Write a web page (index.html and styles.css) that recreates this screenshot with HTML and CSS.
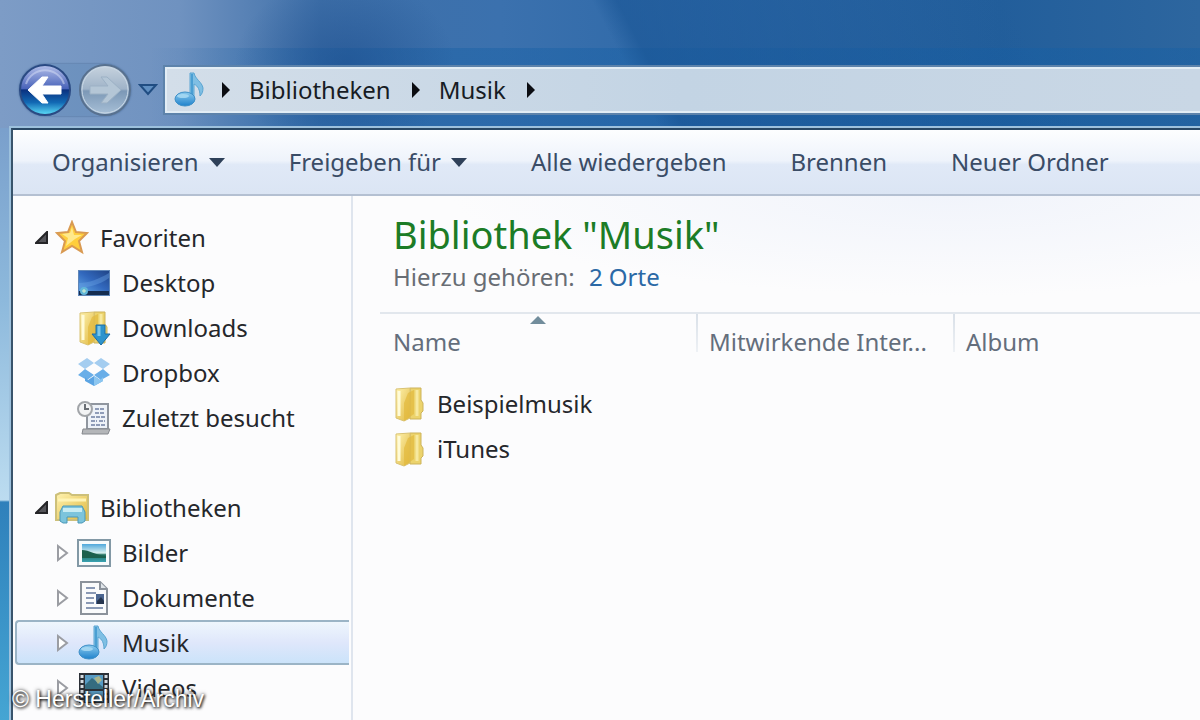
FILE: index.html
```html
<!DOCTYPE html>
<html lang="de">
<head>
    <meta charset="UTF-8">
    <meta name="viewport" content="width=device-width, initial-scale=1.0">
    <title>Musik</title>
    <link rel="stylesheet" href="styles.css">
</head>
<body>
<!-- Shared icons and gradients -->
<svg class="defs" aria-hidden="true">
    <defs>
        <linearGradient id="gold" x1="0" x2="1" y1="0" y2="1">
            <stop offset="0" stop-color="#fff3b0"/>
            <stop offset="1" stop-color="#e0b840"/>
        </linearGradient>
        <linearGradient id="note" x1="0" x2="0" y1="0" y2="1">
            <stop offset="0" stop-color="#8ccbee"/>
            <stop offset="1" stop-color="#1f82cc"/>
        </linearGradient>
        <linearGradient id="backFill" x1="0" x2="0" y1="0" y2="1">
            <stop offset="0" stop-color="#b4c0ea"/>
            <stop offset=".47" stop-color="#4a64ba"/>
            <stop offset=".5" stop-color="#0b3180"/>
            <stop offset=".75" stop-color="#1269b4"/>
            <stop offset="1" stop-color="#5fe0fa"/>
        </linearGradient>
        <linearGradient id="forwardFill" x1="0" x2="0" y1="0" y2="1">
            <stop offset="0" stop-color="#c8d4df"/>
            <stop offset=".48" stop-color="#9fb3c8"/>
            <stop offset=".52" stop-color="#7c98b6"/>
            <stop offset="1" stop-color="#a9c1d8"/>
        </linearGradient>
        <linearGradient id="screen" x1="0" x2="1" y1="1" y2="0">
            <stop offset="0" stop-color="#5da2e4"/>
            <stop offset=".5" stop-color="#3268bd"/>
            <stop offset="1" stop-color="#204588"/>
        </linearGradient>
        <linearGradient id="photo" x1="0" x2="0" y1="0" y2="1">
            <stop offset="0" stop-color="#4fa8dc"/>
            <stop offset=".5" stop-color="#d8f0ee"/>
            <stop offset=".6" stop-color="#22705f"/>
            <stop offset="1" stop-color="#3aa3b4"/>
        </linearGradient>
    </defs>
    <symbol id="music" viewBox="0 0 34 36">
        <path d="M17 26V1h4c1 6 8 9 9 15 0 4-1 6-3 8 0-6-2-10-6-12v15z" fill="#7fbfe4" stroke="#5aa5d2"/>
        <path d="M19 2v24" stroke="#4b9fd3" stroke-width="2"/>
        <ellipse cx="12" cy="27" rx="10" ry="7" fill="url(#note)" stroke="#3d8fc7"/>
        <ellipse cx="10" cy="24" rx="6" ry="2" fill="#b6e2f7" opacity=".7"/>
    </symbol>
    <symbol id="folder" viewBox="0 0 34 36">
        <path d="M17 2h11v12l2 3v8l-2 2v6H17z" fill="#ecd36c" stroke="#cdb35a"/>
        <path d="M3 3l14-1v30l-6 3-8-3z" fill="url(#gold)" stroke="#d9c272"/>
        <path d="M15 7l6-3v24l-10 7V17z" fill="#e3b93d" opacity=".7"/>
        <path d="M6 5v25" stroke="#fffbd8" stroke-width="3"/>
        <path d="M24 4v26" stroke="#f7e9a0" stroke-width="3"/>
    </symbol>
    <symbol id="closed" viewBox="0 0 12 18">
        <path d="M1 2l9 7-9 7z" fill="#fff" stroke="#9b9da3" stroke-width="2"/>
    </symbol>
    <symbol id="open" viewBox="0 0 14 14">
        <path d="M12 1v11H1z" fill="#55555a" stroke="#252528" stroke-width="2"/>
    </symbol>
    <symbol id="crumb" viewBox="0 0 10 16">
        <path d="M1 0l8 8-8 8z" fill="#0b0d12"/>
    </symbol>
</svg>

<div class="window">
    <header class="titlebar">
        <div class="history">
            <button class="round" aria-label="Zurück">
                <svg viewBox="0 0 52 52">
                    <circle cx="26" cy="26" r="25" fill="url(#backFill)" stroke="#2a4a83" stroke-width="2"/>
                    <path d="M7 20a20 20 0 0 1 38 0" fill="none" stroke="#d5ddf5" stroke-width="2" opacity=".5"/>
                    <path d="M9 26l14-13h6l-6 9h19v8H23l6 9h-6z" fill="#fff" stroke="#fff" stroke-linejoin="round"/>
                </svg>
            </button>
            <button class="round" aria-label="Vorwärts">
                <svg viewBox="0 0 52 52">
                    <circle cx="26" cy="26" r="25" fill="url(#forwardFill)" stroke="#58718f" stroke-width="2"/>
                    <circle cx="26" cy="26" r="23" fill="none" stroke="#c9d8e6" stroke-width="1"/>
                    <path d="M42 26L28 13h-6l7 9H11v8h18l-7 9h6z" fill="#b4c6d6" stroke="#9cb1c5"/>
                </svg>
            </button>
        </div>
        <button class="recent" aria-label="Letzte Seiten">
            <svg viewBox="0 0 20 14"><path d="M2 2h16l-8 9z" fill="#5f8fc2" stroke="#204d82" stroke-width="2"/></svg>
        </button>
        <nav class="address" aria-label="Adresse">
            <svg class="icon"><use href="#music"/></svg>
            <svg class="crumb"><use href="#crumb"/></svg>
            <a href="#bibliotheken">Bibliotheken</a>
            <svg class="crumb"><use href="#crumb"/></svg>
            <a href="#musik">Musik</a>
            <svg class="crumb"><use href="#crumb"/></svg>
        </nav>
    </header>

    <div class="client">
        <div class="toolbar">
            <button>Organisieren <svg class="caret" viewBox="0 0 16 9"><path d="M0 0h16L8 9z"/></svg></button>
            <button>Freigeben für <svg class="caret" viewBox="0 0 16 9"><path d="M0 0h16L8 9z"/></svg></button>
            <button>Alle wiedergeben</button>
            <button>Brennen</button>
            <button>Neuer Ordner</button>
        </div>

        <div class="panes">
            <!-- Navigation pane -->
            <nav class="sidebar" aria-label="Navigation">
                <div class="group">
                    <a class="row root" href="#favoriten">
                        <svg class="arrow"><use href="#open"/></svg>
                        <svg class="icon" viewBox="0 0 34 36"><path d="M17 2l4 10 11 1-8 8 3 11-10-6-10 6 3-11-8-8 11-1z" fill="#ffce3c" stroke="#d99a52" stroke-width="2"/><path d="M17 7l2 8h8l-7 4-9 7 2-8-6-4 8-1z" fill="#fff0a0" opacity=".8"/></svg>
                        Favoriten
                    </a>
                    <a class="row" href="#desktop">
                        <svg class="icon" viewBox="0 0 34 36"><path d="M1 5h32v26H1z" fill="#5f86b8"/><path d="M2 6h30v21H2z" fill="url(#screen)"/><path d="M2 26h30v4H2z" fill="#142c50"/><path d="M2 18c10 0 20-4 30-10v5C22 20 12 22 2 23z" fill="#6ca6e6" opacity=".4"/><circle cx="7" cy="26" r="4" fill="#62b7d8"/><path d="M5 26h4M7 24v4" stroke="#d8f1d0"/></svg>
                        Desktop
                    </a>
                    <a class="row" href="#downloads">
                        <svg class="icon"><use href="#folder"/><path d="M19 15h9v9h5L24 35 15 24h4z" fill="#2e94cd" stroke="#1c6da5"/><path d="M22 16v10" stroke="#7cc8ea" stroke-width="3"/></svg>
                        Downloads
                    </a>
                    <a class="row" href="#dropbox">
                        <svg class="icon" viewBox="0 0 34 36"><path d="M10 3l7 5-9 6-7-5zM24 3l9 6-7 5-9-6z" fill="#a4cdf0"/><path d="M8 14l9 6-7 5-9-5zM26 14l7 6-9 5-7-5z" fill="#69aee8"/><path d="M8 22l3 3 6-4 6 4 3-3v4l-9 5-9-5z" fill="#5ba4e3"/><path d="M17 21v10l9-5v-4l-3 3z" fill="#8cc6f0"/></svg>
                        Dropbox
                    </a>
                    <a class="row" href="#zuletzt">
                        <svg class="icon" viewBox="0 0 34 36"><path d="M10 4h21v25H10z" fill="#eef2f8" stroke="#90969f" stroke-width="2"/><path d="M6 29h27l-2 5H5z" fill="#b4b6b9" stroke="#85888d"/><path d="M18 9h9M18 13h10M14 17h14M14 21h6M22 21h6M14 25h14" stroke="#8f9cb8" stroke-width="2" stroke-dasharray="4 1"/><circle cx="8" cy="9" r="7" fill="#f2f3f4" stroke="#a2a5a9" stroke-width="2"/><path d="M8 4v5h4" fill="none" stroke="#6b6f75" stroke-width="2"/></svg>
                        Zuletzt besucht
                    </a>
                </div>
                <div class="group">
                    <a class="row root" href="#bibliotheken">
                        <svg class="arrow"><use href="#open"/></svg>
                        <svg class="icon" viewBox="0 0 34 36"><path d="M1 5l4-2h9l3 2h16v25H1z" fill="url(#gold)" stroke="#cdc07a" stroke-width="2"/><path d="M3 10h28" stroke="#fff4b5" stroke-width="3"/><path d="M5 22l3-6h19l3 6v9l-3 2h-4v-6H12v6H8l-3-2z" fill="#7cc4dc" stroke="#4a98b8"/><path d="M8 18h19v4H8z" fill="#c8ecf3"/></svg>
                        Bibliotheken
                    </a>
                    <a class="row" href="#bilder">
                        <svg class="arrow"><use href="#closed"/></svg>
                        <svg class="icon" viewBox="0 0 34 36"><path d="M1 5h32v26H1z" fill="#f7fbfc" stroke="#8298a5" stroke-width="2"/><path d="M5 9h24v18H5z" fill="url(#photo)"/><path d="M5 15c7 0 14 5 24 6v2H5z" fill="#1c604d"/></svg>
                        Bilder
                    </a>
                    <a class="row" href="#dokumente">
                        <svg class="arrow"><use href="#closed"/></svg>
                        <svg class="icon" viewBox="0 0 34 36"><path d="M4 2h19l7 7v25H4z" fill="#fafbfc" stroke="#8b929b" stroke-width="2"/><path d="M23 2v7h7" fill="#dfe4e9" stroke="#8b929b" stroke-width="2"/><path d="M9 8h9M9 13h10M9 18h8M9 23h8M9 28h17" stroke="#8a99b5" stroke-width="2"/><path d="M19 14h8v10h-8z" fill="#4c6691"/><path d="M20 21l4-4 3 4v3h-7z" fill="#27364f"/></svg>
                        Dokumente
                    </a>
                    <a class="row selected" href="#musik">
                        <svg class="arrow"><use href="#closed"/></svg>
                        <svg class="icon"><use href="#music"/></svg>
                        Musik
                    </a>
                    <a class="row" href="#videos">
                        <svg class="arrow"><use href="#closed"/></svg>
                        <svg class="icon" viewBox="0 0 34 36"><path d="M2 3h30v30H2z" fill="#2b3037"/><path d="M8 5h18v14H8zM8 21h18v11H8z" fill="#579bc4"/><path d="M8 15l7-7 11 9v2H8z" fill="#356c80"/><path d="M17 8l5-2 3 4-4 4z" fill="#a9b48c"/><path d="M5 5v28M29 5v28" stroke="#d5dce2" stroke-width="3" stroke-dasharray="3 2"/></svg>
                        Videos
                    </a>
                </div>
            </nav>

            <!-- Library contents -->
            <main class="content">
                <h1>Bibliothek "Musik"</h1>
                <p class="includes">Hierzu gehören: <a href="#orte">2 Orte</a></p>
                <table class="files">
                    <colgroup>
                        <col class="col-name">
                        <col class="col-artist">
                        <col>
                    </colgroup>
                    <thead>
                        <tr>
                            <th>Name<svg class="sort" viewBox="0 0 16 8"><path d="M0 8l8-8 8 8z" fill="#728d9c"/></svg></th>
                            <th>Mitwirkende Inter...</th>
                            <th>Album</th>
                        </tr>
                    </thead>
                    <tbody>
                        <tr><td colspan="3"><div class="file"><svg class="icon"><use href="#folder"/></svg>Beispielmusik</div></td></tr>
                        <tr><td colspan="3"><div class="file"><svg class="icon"><use href="#folder"/></svg>iTunes</div></td></tr>
                    </tbody>
                </table>
            </main>
        </div>
    </div>
</div>
<div class="credit">© Hersteller/Archiv</div>
</body>
</html>
```

FILE: styles.css
```css
* {
    box-sizing: border-box;
}
body {
    margin: 0;
    height: 100vh;
    overflow: hidden;
    position: relative;
    font-family: "Noto Sans", "Open Sans", sans-serif;
    font-size: 24px;
    line-height: 30px;
    color: #25272b;
    background: linear-gradient(#7697c3 0, #7aa0cc 130px, #8db9dc 300px, #bcdcf0 500px, #2f80bb 502px, #45a5d3 100%);
}
a {
    color: inherit;
    text-decoration: none;
}
button {
    font: inherit;
    color: inherit;
    border: none;
    background: none;
    padding: 0;
    cursor: pointer;
}
svg {
    display: block;
    flex: none;
}
.defs {
    position: absolute;
    width: 0;
    height: 0;
}
.icon {
    width: 34px;
    height: 36px;
}
.window {
    height: 100%;
    display: flex;
    flex-direction: column;
}

/* Glass frame */
.titlebar {
    display: flex;
    align-items: center;
    height: 128px;
    flex: none;
    padding: 52px 0 0 19px;
    background:
        radial-gradient(ellipse 110px 90px at 345px 65px, rgba(28, 78, 142, 0.6), transparent),
        linear-gradient(62deg, transparent 52%, rgba(24, 84, 148, 0.6) 54%, transparent 85%),
        linear-gradient(90deg, transparent 150px, rgba(20, 95, 165, 0.4) 350px) bottom / 100% 80px no-repeat,
        linear-gradient(90deg, #7d9cc6 0, #6f92c0 180px, #3f70a9 320px, #3b71ae 500px, #2e69a8 700px, #225e9b 1000px, #2d669f 100%);
}
.history {
    display: flex;
    gap: 8px;
    border-radius: 26px;
    background: rgba(100, 140, 185, 0.5);
    box-shadow: 0 0 2px #3d618e;
}
.round {
    width: 52px;
    height: 52px;
}
.recent {
    margin: 0 7px;
}
.recent svg {
    width: 20px;
    height: 14px;
}
.address {
    flex: 1;
    display: flex;
    align-items: center;
    height: 46px;
    padding-left: 6px;
    border: 2px solid #e2edf5;
    border-right: none;
    outline: 2px solid #5d83ab;
    color: #171c24;
    background: linear-gradient(90deg, #d3dee9, #c3d4e4 50%, #c9d7e5);
}
.address a {
    margin: 0 20px 0 18px;
}
.crumb {
    width: 10px;
    height: 16px;
}
.address .icon + .crumb {
    margin-left: 14px;
}

/* Client area */
.client {
    flex: 1;
    min-height: 0;
    margin-left: 11px;
    display: flex;
    flex-direction: column;
    border-top: 2px solid #294865;
    border-left: 2px solid #38546c;
    outline: 2px solid #9dc1dd;
    background: #fcfcfd;
}
.toolbar {
    display: flex;
    gap: 64px;
    height: 66px;
    flex: none;
    padding-left: 39px;
    color: #3a4c66;
    border-bottom: 2px solid #b4c0d2;
    background: linear-gradient(#fdfeff, #eef3fb 48%, #e0e9f7 54%, #dbe5f4);
}
.toolbar button {
    display: flex;
    align-items: center;
    gap: 10px;
    white-space: nowrap;
}
.caret {
    width: 16px;
    height: 9px;
    fill: #2e4059;
}
.panes {
    flex: 1;
    min-height: 0;
    display: flex;
}
.sidebar {
    width: 340px;
    flex: none;
    padding: 19px 2px 0;
    border-right: 2px solid #dfe5ee;
    overflow: hidden;
}
.group {
    margin-bottom: 45px;
}
.row {
    display: flex;
    align-items: center;
    height: 45px;
    padding-left: 62px;
    gap: 11px;
    white-space: nowrap;
}
.row .arrow {
    width: 12px;
    height: 18px;
    margin-left: -20px;
    margin-right: -3px;
}
.row.root {
    padding-left: 40px;
}
.root .arrow {
    width: 14px;
    height: 14px;
}
.root .icon {
    margin-left: -2px;
}
.row.selected {
    border: 2px solid #9bb4c6;
    border-right: none;
    border-radius: 4px 0 0 4px;
    padding-left: 60px;
    background: linear-gradient(#eef6fd, #dfe7fb 50%, #cbe3fa);
}

/* Library */
.content {
    flex: 1;
    min-width: 0;
    padding: 14px 0 0 27px;
    background: radial-gradient(ellipse 500px 100px at 600px 0, #f1f4fb, #fcfcfd);
}
h1 {
    margin: 0 0 4px 13px;
    font-size: 38px;
    font-weight: normal;
    line-height: 48px;
    color: #1c7c26;
}
.includes {
    margin: 0 0 20px 13px;
    color: #686d74;
}
.includes a {
    color: #2b69a6;
    margin-left: 8px;
}
.files {
    width: 100%;
    table-layout: fixed;
    border-collapse: collapse;
    border-top: 2px solid #e2e7ed;
}
.col-name {
    width: 316px;
}
.col-artist {
    width: 257px;
}
th {
    position: relative;
    height: 67px;
    padding: 13px 13px 24px;
    font-weight: normal;
    text-align: left;
    white-space: nowrap;
    color: #646e7c;
}
th + th {
    background: linear-gradient(#d9e0e8, #eef1f5) left top / 2px 38px no-repeat;
}
.sort {
    position: absolute;
    top: 2px;
    left: 50%;
    width: 16px;
    height: 8px;
    transform: translateX(-50%);
}
td {
    padding: 0;
}
.file {
    display: flex;
    align-items: center;
    gap: 10px;
    height: 45px;
    padding-left: 13px;
}

/* Photo credit over the lower left corner */
.credit {
    position: absolute;
    left: 12px;
    bottom: 7px;
    font-family: "Liberation Sans", Arial, sans-serif;
    font-size: 23px;
    line-height: 28px;
    color: #fff;
    text-shadow: 1px 1px 3px #000, 0 0 4px #444;
}
```
